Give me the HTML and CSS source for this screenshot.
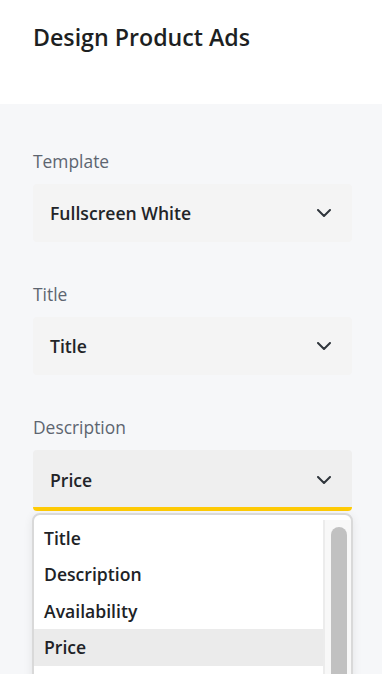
FILE: index.html
```html
<!DOCTYPE html>
<html lang="en">
<head>
<meta charset="utf-8">
<title>Design Product Ads</title>
<link rel="stylesheet" href="styles.css">
</head>
<body>
  <header class="header">
    <h1 class="header-title">Design Product Ads</h1>
  </header>
  <main class="content">
    <div class="field">
      <div class="field-label">Template</div>
      <div class="select">
        <span class="select-value">Fullscreen White</span>
        <svg class="chevron" width="14" height="8" viewBox="0 0 14 8"><path d="M1 1l6 6 6-6" fill="none" stroke="#30363c" stroke-width="2" stroke-linecap="round" stroke-linejoin="round"/></svg>
      </div>
    </div>
    <div class="field">
      <div class="field-label">Title</div>
      <div class="select">
        <span class="select-value">Title</span>
        <svg class="chevron" width="14" height="8" viewBox="0 0 14 8"><path d="M1 1l6 6 6-6" fill="none" stroke="#30363c" stroke-width="2" stroke-linecap="round" stroke-linejoin="round"/></svg>
      </div>
    </div>
    <div class="field">
      <div class="field-label">Description</div>
      <div class="select select-open">
        <span class="select-value">Price</span>
        <svg class="chevron" width="14" height="8" viewBox="0 0 14 8"><path d="M1 1l6 6 6-6" fill="none" stroke="#30363c" stroke-width="2" stroke-linecap="round" stroke-linejoin="round"/></svg>
      </div>
      <div class="menu">
        <ul class="menu-list">
          <li class="menu-item">Title</li>
          <li class="menu-item">Description</li>
          <li class="menu-item">Availability</li>
          <li class="menu-item menu-item-active">Price</li>
        </ul>
        <div class="scrollbar"><div class="scroll-thumb"></div></div>
      </div>
    </div>
  </main>
</body>
</html>
```
FILE: styles.css
```css
* { box-sizing: border-box; }
html, body { margin: 0; padding: 0; }
body {
  font-family: "Open Sans", "Liberation Sans", sans-serif;
  background: #f6f7f9;
  height: 674px;
  overflow: hidden;
  color: #1f2124;
}
.header {
  background: #ffffff;
  height: 104px;
  padding: 22px 33px 0;
}
.header-title {
  margin: 0;
  font-size: 23.2px;
  line-height: 30px;
  font-weight: 600;
  color: #1d1f22;
}
.content {
  padding: 46px 30px 0 33px;
}
.field { margin-bottom: 41.5px; }
.field-label {
  font-size: 17.4px;
  line-height: 22px;
  color: #5d6570;
  margin-bottom: 12px;
}
.select {
  height: 57.5px;
  background: #f4f4f4;
  border-radius: 4px;
  display: flex;
  align-items: center;
  justify-content: space-between;
  padding: 0 21px 0 17px;
}
.select-open {
  background: #efefef;
  height: 61px;
  padding-top: 2px;
  border-bottom: 4px solid #ffcb05;
}
.select-value {
  font-size: 17.6px;
  font-weight: 600;
  color: #222428;
}
.chevron { display: block; }
.menu {
  margin-top: 2px;
  margin-left: -1px;
  margin-right: -1px;
  height: 200px;
  background: #fff;
  border: 2px solid #d9d9d9;
  border-radius: 8px;
  box-shadow: 0 2px 10px rgba(0,0,0,0.08);
  display: flex;
  overflow: hidden;
}
.menu-list {
  list-style: none;
  margin: 0;
  padding: 4.5px 0 0;
  flex: 1;
}
.menu-item {
  height: 36.5px;
  display: flex;
  align-items: center;
  padding-left: 10px;
  font-size: 17.6px;
  font-weight: 600;
  color: #202226;
}
.menu-item-active { background: #ebebeb; }
.scrollbar {
  width: 28px;
  margin-top: 4.5px;
  background: #f8f8f8;
  border-left: 2px solid #ececec;
  padding: 7px 4px 0 6px;
}
.scroll-thumb {
  height: 200px;
  background: #c1c1c1;
  border-radius: 8px;
}
```
